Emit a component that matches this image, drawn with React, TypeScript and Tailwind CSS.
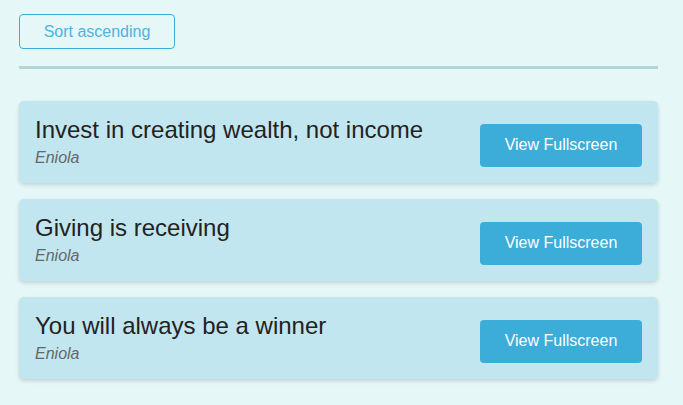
const QUOTES = [
  { text: "Invest in creating wealth, not income", author: "Eniola" },
  { text: "Giving is receiving", author: "Eniola" },
  { text: "You will always be a winner", author: "Eniola" },
];

export default function App() {
  return (
    <div className="min-h-[405px] bg-[#e5f7f7] pl-[19px] pr-[25px] pt-[14px] pb-6 font-['Liberation_Sans',Arial,sans-serif]">
      <button className="h-[35px] w-[156px] rounded-[4px] border border-[#3badd8] text-[16px] text-[#4db3df]">
        Sort ascending
      </button>
      <div className="mt-[17px] h-[3px] bg-[#b0d6d6]" />

      <div className="mt-[32px] flex flex-col gap-4">
        {QUOTES.map((q) => (
          <div
            key={q.text}
            className="flex items-center justify-between rounded-[5px] bg-[#c2e6f0] px-4 pt-[15px] pb-[15px] shadow-[0_2px_4px_rgba(0,0,0,0.15)]"
          >
            <div>
              <p className="text-[24px] leading-[28px] text-[#222222]">{q.text}</p>
              <p className="mt-[4px] text-[16px] leading-[20px] italic text-[#666666]">
                {q.author}
              </p>
            </div>
            <button className="mt-[6px] h-[43px] w-[162px] rounded-[4px] bg-[#3badd8] text-[16px] text-white">
              View Fullscreen
            </button>
          </div>
        ))}
      </div>
    </div>
  );
}
